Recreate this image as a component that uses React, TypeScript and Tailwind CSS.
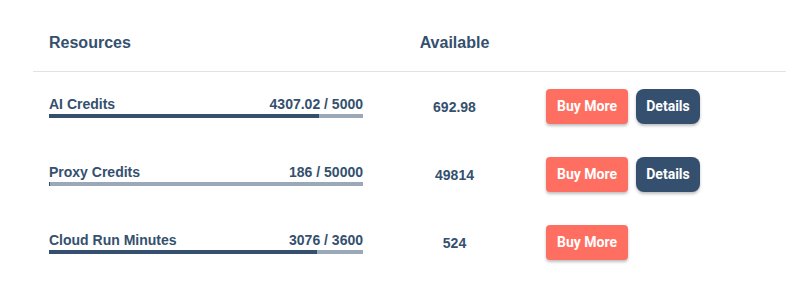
import React from "react";

type Row = { name: string; used: number; total: number; usedLabel: string; available: string; details: boolean };

const rows: Row[] = [
  { name: "AI Credits", used: 4307.02, total: 5000, usedLabel: "4307.02 / 5000", available: "692.98", details: true },
  { name: "Proxy Credits", used: 186, total: 50000, usedLabel: "186 / 50000", available: "49814", details: true },
  { name: "Cloud Run Minutes", used: 3076, total: 3600, usedLabel: "3076 / 3600", available: "524", details: false },
];

export default function App() {
  return (
    <div className="w-[786px] h-[287px] bg-white overflow-hidden text-[#34506e]" style={{ fontFamily: '"Liberation Sans", Arial, sans-serif' }}>
      <div className="ml-[33px]">
        <div className="grid grid-cols-[346px_151px_1fr] border-b border-[#e2e2e2] pt-[31px] pb-[16px]">
          <div className="px-4 text-[16px] leading-6 font-bold">Resources</div>
          <div className="text-center text-[16px] leading-6 font-bold">Available</div>
          <div />
        </div>
        {rows.map((r) => (
          <div key={r.name} className="grid grid-cols-[346px_151px_1fr] h-[68px] items-center">
            <div className="px-4">
              <div className="flex justify-between text-[14px] leading-5 font-bold">
                <span>{r.name}</span>
                <span>{r.usedLabel}</span>
              </div>
              <div className="h-1 bg-[#9aa8b8]">
                <div className="h-full bg-[#34506e]" style={{ width: `${(r.used / r.total) * 100}%` }} />
              </div>
            </div>
            <div className="text-center text-[14px] leading-5 font-bold pt-px">{r.available}</div>
            <div className="px-4 flex gap-2" style={{ fontFamily: 'Roboto, "Liberation Sans", sans-serif' }}>
              <button className="h-[35px] w-[82px] rounded bg-[#ff6f61] text-white text-[14px] font-bold shadow-[0_2px_3px_rgba(0,0,0,0.25)]">
                Buy More
              </button>
              {r.details && (
                <button className="h-[35px] w-16 rounded-lg bg-[#34506e] text-white text-[14px] font-bold shadow-[0_2px_3px_rgba(0,0,0,0.25)]">
                  Details
                </button>
              )}
            </div>
          </div>
        ))}
      </div>
    </div>
  );
}
